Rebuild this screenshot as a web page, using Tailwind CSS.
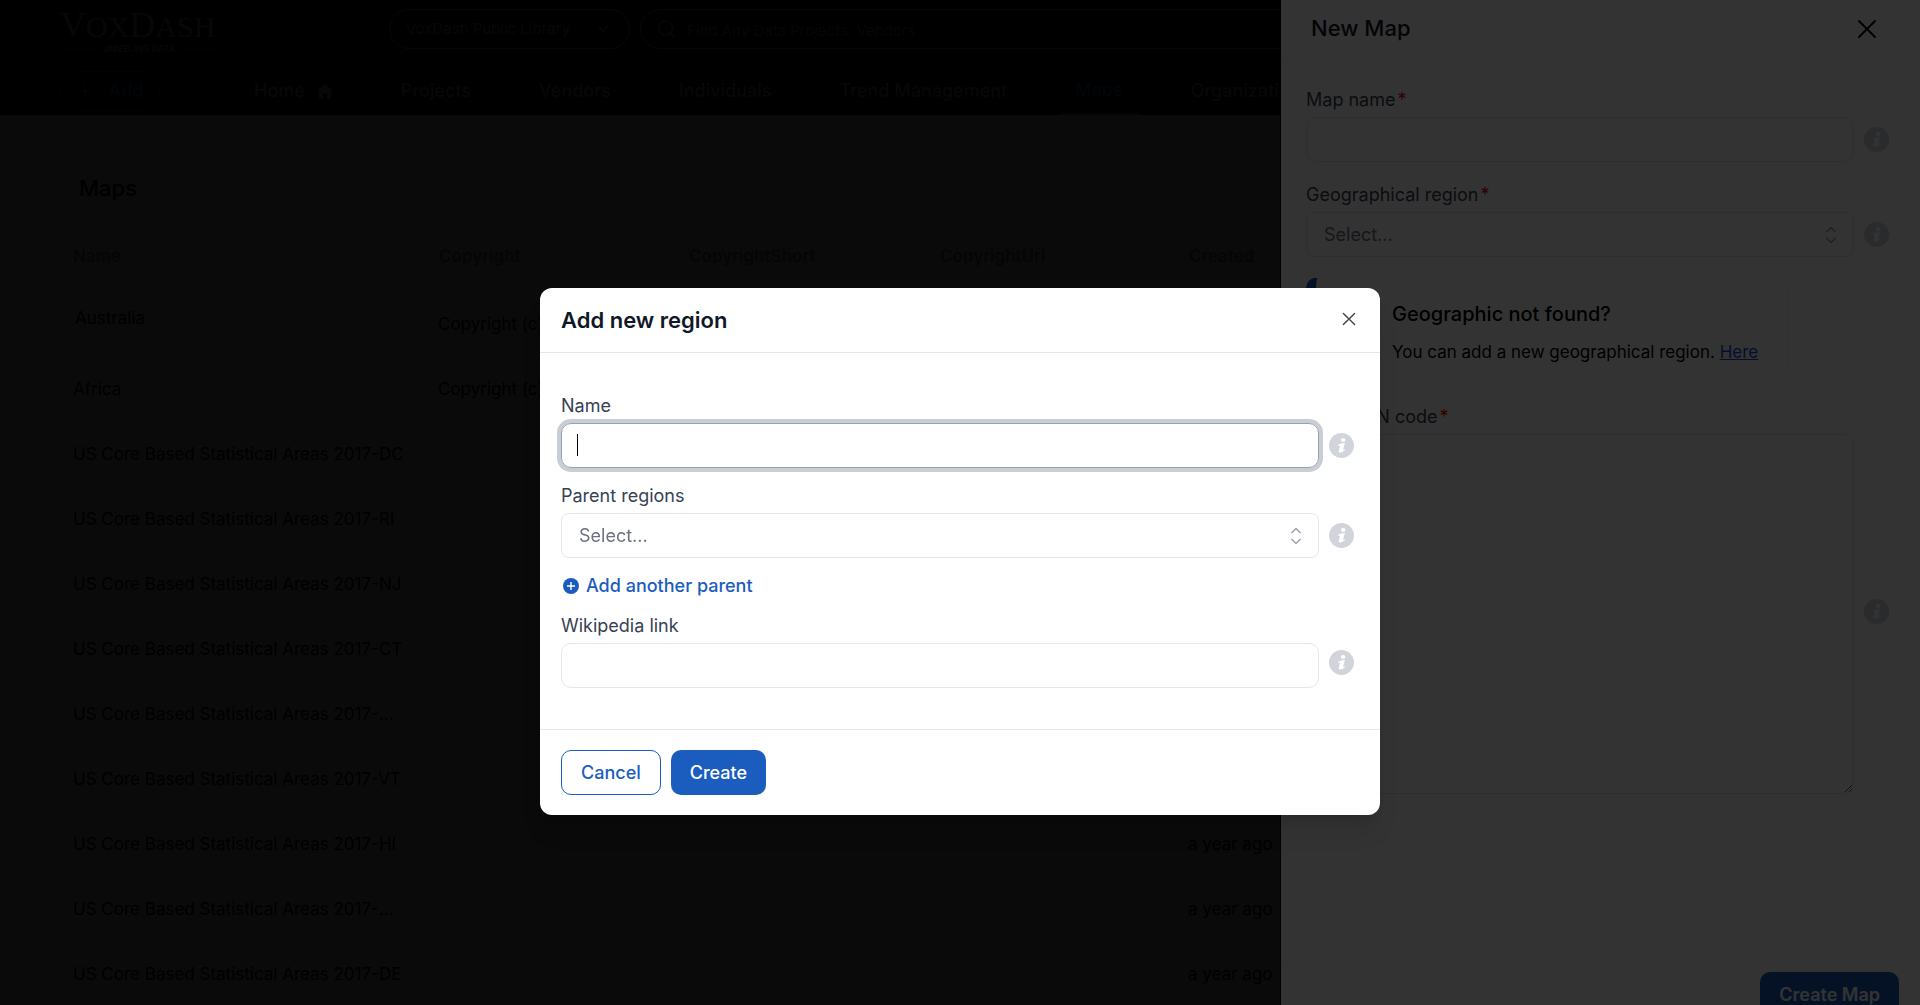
<!DOCTYPE html>
<html lang="en">
<head>
    <meta charset="UTF-8">
    <meta name="viewport" content="width=device-width, initial-scale=1.0">
    <title>VoxDash - Maps</title>
    <script src="https://cdn.jsdelivr.net/npm/@tailwindcss/browser@4"></script>
</head>
<body class="h-screen overflow-hidden bg-white font-[Inter,'Liberation_Sans',sans-serif] text-lg text-black">

    <!-- Icons -->
    <svg class="hidden">
        <symbol id="icon-info" viewBox="0 0 25 25">
            <circle cx="12.5" cy="12.5" r="12.5" fill="#d1d5db"/>
            <ellipse cx="14.2" cy="7" rx="2.200" ry="2" fill="#fff"/>
            <path d="M9.200 11.700C10.800 10.600 13 9.900 15.900 9.900L14 16.700c.6 0 1.200-.3 1.900-.7l-.3 1.500c-1.600 1.500-3.400 2.100-5.100 1.900-1-.2-.9-1-.7-1.800l1.400-5.200c-.7 0-1.400.3-2.200.6z" fill="#fff"/>
        </symbol>
        <symbol id="icon-close" viewBox="0 0 20 20">
            <path d="M2 2l16 16M18 2L2 18" fill="none" stroke="currentColor" stroke-linecap="round"/>
        </symbol>
        <symbol id="icon-updown" viewBox="0 0 12 18">
            <path d="M1.500 6L6 1.500 10.500 6M1.500 12L6 16.500 10.500 12" fill="none" stroke="currentColor" stroke-width="1.500"/>
        </symbol>
    </svg>

    <!-- Page -->
    <div class="h-screen overflow-hidden">
        <header class="bg-[#080808] text-[#b4b4b4]">
            <div class="flex h-[66px] items-start pt-[9px] pl-[60px]">
                <div class="w-[329px]">
                    <div class="w-[158px]">
                        <div class="font-['Liberation_Serif',serif] text-[30px] leading-8 whitespace-nowrap"><span class="text-4xl leading-8">V</span>OX<span class="text-4xl leading-8">D</span>ASH</div>
                        <div class="flex items-center gap-2.5 text-[9px] leading-3 font-semibold whitespace-nowrap">
                            <span class="h-px flex-1 bg-[#777]"></span>UNVELING DATA<span class="h-px flex-1 bg-[#777]"></span>
                        </div>
                    </div>
                </div>
                <button class="flex h-10 w-[241px] items-center justify-between rounded-full border border-[#bbb] pr-5 pl-4 text-[15px]">
                    VoxDash Public Library
                    <svg class="h-2 w-3" viewBox="0 0 12 8"><path d="M1 1l5 5 5-5" fill="none" stroke="currentColor" stroke-width="1.500"/></svg>
                </button>
                <label class="ml-2.5 flex h-10 flex-1 items-center gap-3 rounded-l-full border border-[#bbb] pl-4">
                    <svg class="size-[18px]" viewBox="0 0 18 18"><path d="M15.500 8a7 7 0 1 1-14 0 7 7 0 0 1 14 0zM13 13l4 4" fill="none" stroke="currentColor" stroke-width="1.500"/></svg>
                    <input type="search" aria-label="Search" placeholder="Find Any Data Projects, Vendors" class="flex-1 pt-1 text-[15px] placeholder:text-[#999]">
                </label>
            </div>
            <nav class="flex h-[49px] items-center border-t border-[#222] pl-[60px] font-medium whitespace-nowrap">
                <button class="mr-[78px] flex h-10 w-[100px] items-center justify-center gap-4 rounded-full border border-[#555] text-[#2b7fd8]">
                    <svg class="size-4" viewBox="0 0 16 16"><path d="M8 1v14M1 8h14" stroke="currentColor" stroke-width="1.500"/></svg>Add
                </button>
                <div class="flex h-full items-center gap-9">
                    <a href="#" class="flex items-center gap-3 px-4">Home
                        <svg class="size-4" viewBox="0 0 16 16"><path d="M8 0L0 8h2v8h4v-5h4v5h4V8h2z" fill="currentColor"/></svg>
                    </a>
                    <a href="#" class="px-4">Projects</a>
                    <a href="#" class="px-4">Vendors</a>
                    <a href="#" class="px-4">Individuals</a>
                    <a href="#" class="px-4">Trend Management</a>
                    <a href="#" class="flex h-full items-center border-b-2 border-[#2b7fd8] px-4 text-[#2b7fd8]">Maps</a>
                    <a href="#" class="px-4">Organizations</a>
                </div>
            </nav>
        </header>

        <main class="pt-[53px] pl-[58px]">
            <section class="border-l border-[#eee]">
                <h1 class="pl-5 text-[22px] leading-10 font-medium">Maps</h1>
                <table class="mt-3 w-full table-fixed border-t border-gray-100 text-left text-[17px]">
                    <thead>
                        <tr class="h-[71px] text-[#888]">
                            <th class="w-[365px] pl-3.5 font-semibold">Name</th>
                            <th class="w-[250px] font-semibold"><div class="border-l border-gray-200 pl-3.5">Copyright</div></th>
                            <th class="w-[251px] font-semibold"><div class="border-l border-gray-200 pl-3.5">CopyrightShort</div></th>
                            <th class="w-[249px] font-semibold"><div class="border-l border-gray-200 pl-3.5">CopyrightUrl</div></th>
                            <th class="font-semibold"><div class="border-l border-gray-200 pl-3.5">Created</div></th>
                        </tr>
                    </thead>
                    <tbody id="mapRows"></tbody>
                </table>
            </section>
        </main>
    </div>

    <!-- New map drawer -->
    <div class="absolute inset-0 flex justify-end overflow-hidden bg-black/80">
        <aside class="flex h-[calc(100vh+22px)] w-1/3 flex-col border-l border-black bg-white">
            <div class="flex h-[62px] shrink-0 items-center justify-between border-b border-gray-100 pr-[43px] pb-1 pl-[30px]">
                <h2 class="text-[22px] font-medium text-gray-900">New Map</h2>
                <button aria-label="Close"><svg class="size-5 stroke-2"><use href="#icon-close"/></svg></button>
            </div>
            <form class="flex flex-1 flex-col gap-5 pt-[25px] pr-[31px] pl-[25px] text-gray-700">
                <div>
                    <label for="mapName" class="mb-1 block leading-[26px]">Map name<span class="ml-0.5 text-red-600">*</span></label>
                    <div class="flex items-center gap-2.5">
                        <input id="mapName" type="text" class="h-[45px] min-w-0 flex-1 rounded-[10px] border border-gray-200 px-4">
                        <svg class="size-[25px]"><use href="#icon-info"/></svg>
                    </div>
                </div>
                <div>
                    <label for="mapRegion" class="mb-1 block leading-[26px]">Geographical region<span class="ml-0.5 text-red-600">*</span></label>
                    <div class="flex items-center gap-2.5">
                        <div class="relative flex-1">
                            <select id="mapRegion" class="h-[45px] w-full appearance-none rounded-lg border border-gray-200 px-[17px] text-gray-500"><option>Select...</option></select>
                            <svg class="pointer-events-none absolute top-3.5 right-[17px] h-[18px] w-3 text-gray-400"><use href="#icon-updown"/></svg>
                        </div>
                        <svg class="size-[25px]"><use href="#icon-info"/></svg>
                    </div>
                </div>
                <div class="flex h-[107px] w-[483px] flex-col justify-center gap-2.5 rounded-xl border border-l-[10px] border-gray-100 border-l-[#1b5dbe] pt-1 pl-[76px] text-black">
                    <h3 class="text-xl leading-7 font-medium">Geographic not found?</h3>
                    <p class="text-[17px] leading-7 whitespace-nowrap">You can add a new geographical region. <a href="#" class="text-blue-700 underline">Here</a></p>
                </div>
                <div>
                    <label for="geoCode" class="mb-1 block leading-[26px]">GeoJSON code<span class="ml-0.5 text-red-600">*</span></label>
                    <div class="flex items-center gap-2.5">
                        <textarea id="geoCode" class="block h-[360px] min-w-0 flex-1 resize rounded-[10px] border border-gray-200 px-4 py-2"></textarea>
                        <svg class="mb-1.5 size-[25px]"><use href="#icon-info"/></svg>
                    </div>
                </div>
            </form>
            <div class="flex justify-end border-t border-gray-100 px-[21px] py-2.5">
                <button class="h-[45px] rounded-[10px] bg-[#1b5dbe] px-[19px] font-semibold text-white">Create Map</button>
            </div>
        </aside>
    </div>

    <!-- Add new region modal -->
    <div class="absolute inset-0 flex items-start justify-center overflow-hidden bg-black/80 pt-72">
        <div role="dialog" aria-labelledby="regionTitle" class="w-full max-w-[840px] rounded-xl bg-white shadow-xl">
            <div class="flex h-[65px] items-center justify-between border-b border-gray-200 pr-6 pl-[21px]">
                <h2 id="regionTitle" class="text-[22px] font-semibold text-gray-900">Add new region</h2>
                <button aria-label="Close" class="pb-0.5 text-[#444]"><svg class="size-3.5 stroke-2"><use href="#icon-close"/></svg></button>
            </div>
            <form class="flex flex-col gap-[15px] pt-10 pr-[26px] pb-[41px] pl-[21px] text-gray-700">
                <div>
                    <label for="regionName" class="mb-1 block leading-[26px]">Name</label>
                    <div class="flex items-center gap-2.5">
                        <div class="relative flex-1">
                            <input id="regionName" type="text" class="block h-[45px] w-full rounded-[10px] border border-gray-400 px-[15px] text-black caret-transparent ring-4 ring-[#c9ced5] outline-none">
                            <span class="pointer-events-none absolute top-[11px] left-4 h-[22px] w-px bg-black"></span>
                        </div>
                        <svg class="size-[25px]"><use href="#icon-info"/></svg>
                    </div>
                </div>
                <div>
                    <label for="parentRegion" class="mb-1 block leading-[26px]">Parent regions</label>
                    <div class="flex items-center gap-2.5">
                        <div class="relative flex-1">
                            <select id="parentRegion" class="h-[45px] w-full appearance-none rounded-lg border border-gray-200 px-[17px] text-gray-500"><option>Select...</option></select>
                            <svg class="pointer-events-none absolute top-3.5 right-[17px] h-[18px] w-3 text-gray-400"><use href="#icon-updown"/></svg>
                        </div>
                        <svg class="size-[25px]"><use href="#icon-info"/></svg>
                    </div>
                </div>
                <button type="button" class="flex items-center gap-[7px] self-start pl-0.5 leading-[25px] font-medium text-[#1b5dbe]">
                    <svg class="size-4" viewBox="0 0 16 16"><circle cx="8" cy="8" r="8" fill="currentColor"/><path d="M8 4v8M4 8h8" stroke="#fff" stroke-width="1.400"/></svg>
                    Add another parent
                </button>
                <div>
                    <label for="wikiLink" class="mb-1 block leading-[26px]">Wikipedia link</label>
                    <div class="flex items-center gap-2.5">
                        <input id="wikiLink" type="text" class="h-[45px] flex-1 rounded-[10px] border border-gray-200 px-4">
                        <svg class="mb-1.5 size-[25px]"><use href="#icon-info"/></svg>
                    </div>
                </div>
            </form>
            <div class="flex gap-2.5 border-t border-gray-200 px-[21px] py-5 font-medium">
                <button class="h-[45px] rounded-[10px] border border-[#1b5dbe] px-[19px] text-[#1b5dbe]">Cancel</button>
                <button class="h-[45px] rounded-[10px] bg-[#1b5dbe] px-[19px] text-white">Create</button>
            </div>
        </div>
    </div>

<script>
const areas = 'US Core Based Statistical Areas 2017-';
const maps = [
    { name: 'Australia', copyright: 'Copyright (c)', nameClass: 'pl-4 pb-3' },
    { name: 'Africa', copyright: 'Copyright (c)' },
    ...['DC', 'RI', 'NJ', 'CT', '...', 'VT', 'HI', '...', 'DE'].map(s => ({ name: areas + s, copyright: '' }))
];

document.getElementById('mapRows').innerHTML = maps.map(map => `
    <tr class="h-[65px] border-b border-gray-100">
        <td class="${map.nameClass || 'pl-3.5'}">${map.name}</td>
        <td class="pl-3.5">${map.copyright}</td>
        <td></td>
        <td></td>
        <td class="pl-3.5">a year ago</td>
    </tr>
`).join('');
document.getElementById('regionName').focus();
</script>
</body>
</html>
